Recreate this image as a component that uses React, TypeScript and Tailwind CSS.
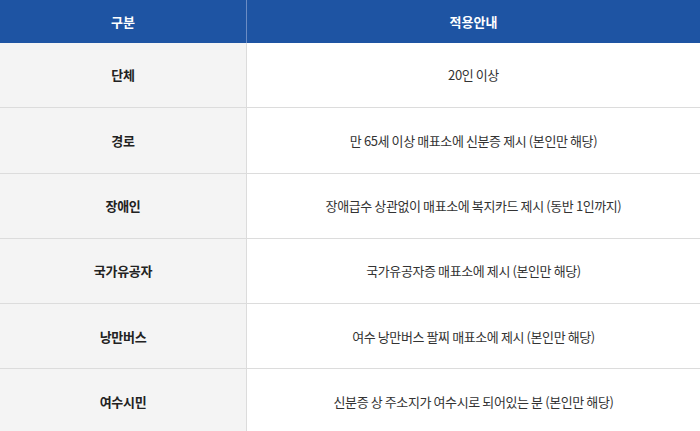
import React from "react";

const rows: [string, string][] = [
  ["단체", "20인 이상"],
  ["경로", "만 65세 이상 매표소에 신분증 제시 (본인만 해당)"],
  ["장애인", "장애급수 상관없이 매표소에 복지카드 제시 (동반 1인까지)"],
  ["국가유공자", "국가유공자증 매표소에 제시 (본인만 해당)"],
  ["낭만버스", "여수 낭만버스 팔찌 매표소에 제시 (본인만 해당)"],
  ["여수시민", "신분증 상 주소지가 여수시로 되어있는 분 (본인만 해당)"],
];

export default function App() {
  return (
    <div
      className="w-[700px] h-[431px] overflow-hidden bg-white"
      style={{ fontFamily: '"Noto Sans CJK KR", "Noto Sans", sans-serif' }}
    >
      <div className="flex h-[43px] bg-[#1e54a3] text-white text-[13px] font-bold">
        <div className="w-[247px] flex items-center justify-center border-r border-[#6b8cc4]">구분</div>
        <div className="flex-1 flex items-center justify-center">적용안내</div>
      </div>
      {rows.map(([k, v]) => (
        <div key={k} className="flex h-[65.3px] border-b border-[#dcdcdc] text-[13px]">
          <div className="w-[247px] flex items-center justify-center bg-[#f4f4f4] border-r border-[#dcdcdc] font-bold text-[#222] tracking-[-0.3px]">
            {k}
          </div>
          <div className="flex-1 flex items-center justify-center text-[#333] tracking-[-0.4px]">{v}</div>
        </div>
      ))}
    </div>
  );
}
